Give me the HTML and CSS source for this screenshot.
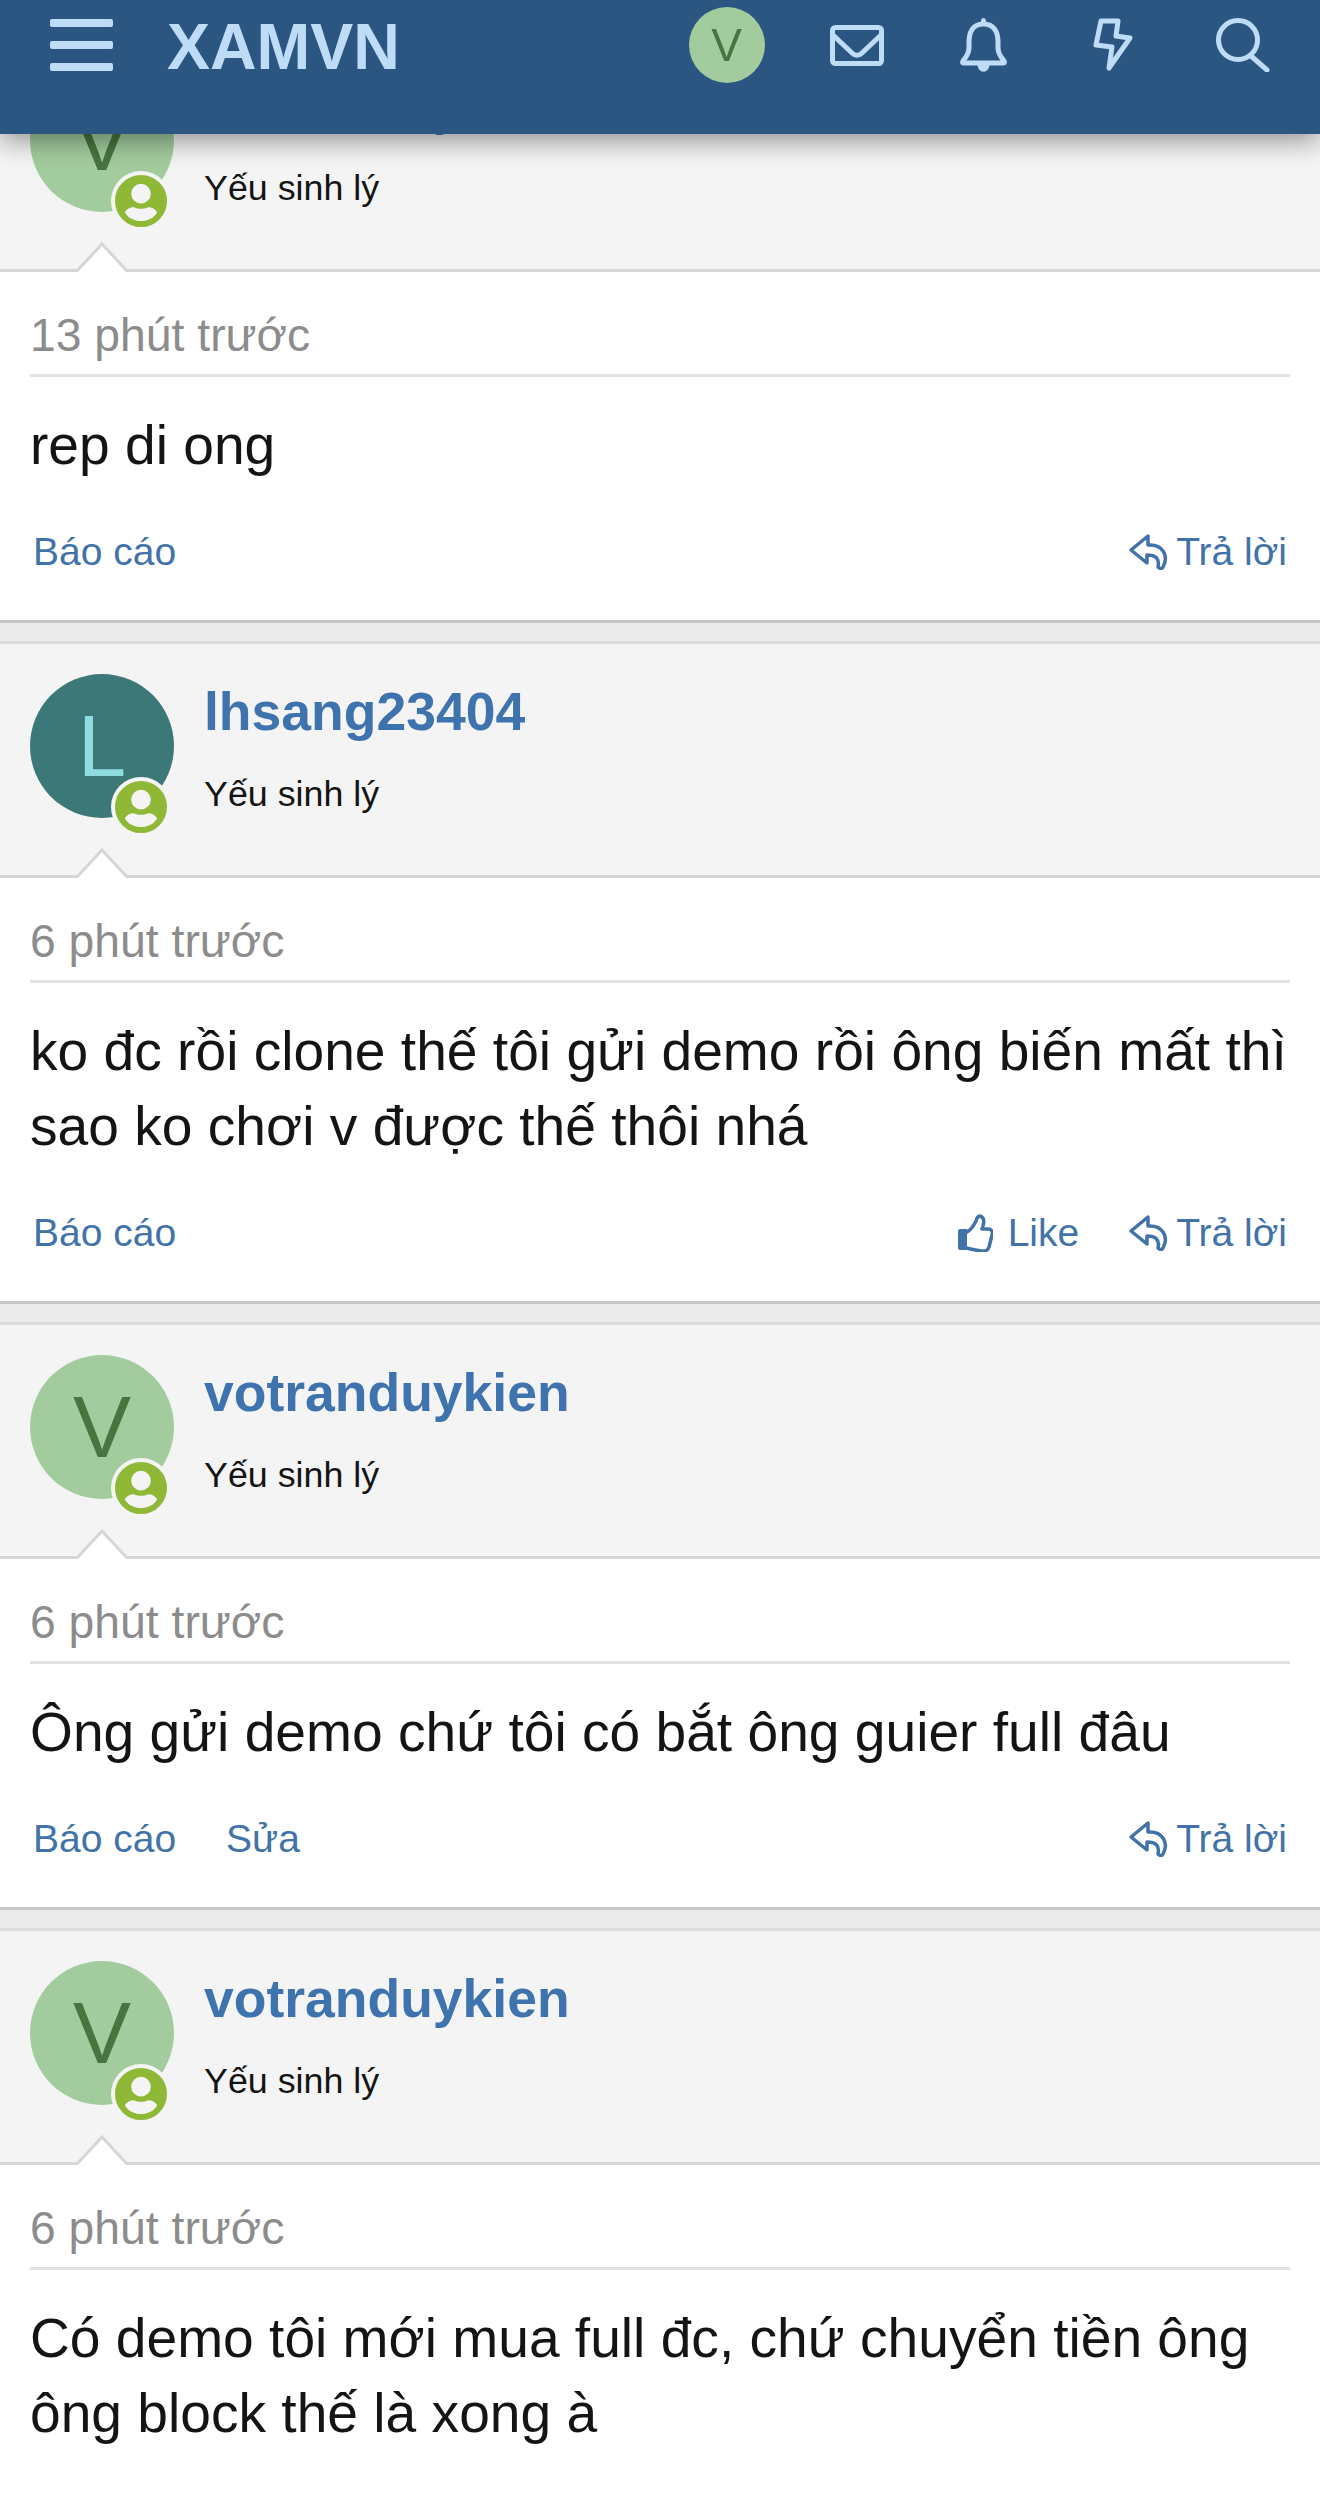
FILE: index.html
```html
<!DOCTYPE html>
<html lang="en">
<head>
   <meta charset="UTF-8">
   <meta name="viewport" content="width=device-width, initial-scale=1.0">
   <title>XAMVN</title>
   <link rel="stylesheet" href="styles.css">
</head>
<body>
   <svg class="icon-defs" width="0" height="0">
      <symbol id="person" viewBox="0 0 53 53">
         <circle cx="26.5" cy="19" r="10"/>
         <path d="M10 38c2-4 8-6 10-5 4 2 9 2 13 0 2-1 8 1 10 5-3 6-10 9-16.500 9S13 44 10 38z"/>
      </symbol>
      <symbol id="like" viewBox="0 0 36 38">
         <path class="solid" d="M1 17c0-1 1-2 2-2h7v21H3c-1 0-2-1-2-2z"/>
         <path class="line" d="M10 18c4-2 7-7 9-11 1-4 2-5 4-5 4 1 5 6 2 13h7c3 1 4 3 3 6l-3 12c-1 3-2 4-5 4-7 0-12-2-18-3"/>
      </symbol>
      <symbol id="reply" viewBox="0 0 40 36">
         <path class="line" d="M19 2 2 16l16 13v-8c8 0 13 3 11 12 2 2 4 2 5 0 6-11 0-23-15-22z"/>
      </symbol>
   </svg>

   <header class="topbar">
      <div class="topbar__menu"><span></span><span></span><span></span></div>
      <div class="topbar__brand">XAMVN</div>
      <nav class="topbar__nav">
         <div class="topbar__item"><div class="topbar__avatar">V</div></div>
         <div class="topbar__item topbar__item--mail">
            <svg width="54" height="41" viewBox="0 0 54 41"><rect x="2.500" y="2.500" width="49" height="36" rx="3"/><path d="M3 10l19 18c3 3 7 3 10 0l19-18"/></svg>
         </div>
         <div class="topbar__item topbar__item--bell">
            <svg width="47" height="54" viewBox="0 0 47 54"><path d="M23.500 6C13 6 9 14 9 24v6c0 6-3 9-6 13-1 2 0 2 1 2h39c1 0 2 0 1-2-3-4-6-7-6-13v-6c0-10-4-18-14.500-18z"/><path class="fill" d="M21 3c0-4 5-4 5 0v4h-5zM17.500 47h12c-1 9-11 9-12 0z"/></svg>
         </div>
         <div class="topbar__item topbar__item--bolt">
            <svg width="41" height="54" viewBox="0 0 41 54"><path d="M8 3h17l-2 15 14 2-21 30 3-21-16-2z"/></svg>
         </div>
         <div class="topbar__item">
            <svg width="54" height="54" viewBox="0 0 54 54"><circle cx="22" cy="22" r="19.500"/><path d="M35 38l16 14"/></svg>
         </div>
      </nav>
   </header>

   <main class="posts">
      <article class="post">
         <div class="post__user">
            <div class="avatar avatar--green">V<svg class="avatar__badge"><use href="#person"/></svg></div>
            <div class="post__who">
               <div class="post__name">votranduykien</div>
               <div class="post__title">Yếu sinh lý</div>
            </div>
            <svg class="post__arrow" width="56" height="30" viewBox="0 0 56 30"><path d="M2 30 28 2l26 28"/></svg>
         </div>
         <div class="post__body">
            <div class="post__date">13 phút trước</div>
            <div class="post__text">rep di ong</div>
            <div class="post__actions">
               <a class="action">Báo cáo</a>
               <a class="action action--push"><svg class="action__reply"><use href="#reply"/></svg>Trả lời</a>
            </div>
         </div>
      </article>

      <article class="post">
         <div class="post__user">
            <div class="avatar avatar--teal">L<svg class="avatar__badge"><use href="#person"/></svg></div>
            <div class="post__who">
               <div class="post__name">lhsang23404</div>
               <div class="post__title">Yếu sinh lý</div>
            </div>
            <svg class="post__arrow" width="56" height="30" viewBox="0 0 56 30"><path d="M2 30 28 2l26 28"/></svg>
         </div>
         <div class="post__body">
            <div class="post__date">6 phút trước</div>
            <div class="post__text">ko đc rồi clone thế tôi gửi demo rồi ông biến mất thì<br>sao ko chơi v được thế thôi nhá</div>
            <div class="post__actions">
               <a class="action">Báo cáo</a>
               <a class="action action--push"><svg class="action__like"><use href="#like"/></svg>Like</a>
               <a class="action"><svg class="action__reply"><use href="#reply"/></svg>Trả lời</a>
            </div>
         </div>
      </article>

      <article class="post">
         <div class="post__user">
            <div class="avatar avatar--green">V<svg class="avatar__badge"><use href="#person"/></svg></div>
            <div class="post__who">
               <div class="post__name">votranduykien</div>
               <div class="post__title">Yếu sinh lý</div>
            </div>
            <svg class="post__arrow" width="56" height="30" viewBox="0 0 56 30"><path d="M2 30 28 2l26 28"/></svg>
         </div>
         <div class="post__body">
            <div class="post__date">6 phút trước</div>
            <div class="post__text">Ông gửi demo chứ tôi có bắt ông guier full đâu</div>
            <div class="post__actions">
               <a class="action">Báo cáo</a>
               <a class="action">Sửa</a>
               <a class="action action--push"><svg class="action__reply"><use href="#reply"/></svg>Trả lời</a>
            </div>
         </div>
      </article>

      <article class="post">
         <div class="post__user">
            <div class="avatar avatar--green">V<svg class="avatar__badge"><use href="#person"/></svg></div>
            <div class="post__who">
               <div class="post__name">votranduykien</div>
               <div class="post__title">Yếu sinh lý</div>
            </div>
            <svg class="post__arrow" width="56" height="30" viewBox="0 0 56 30"><path d="M2 30 28 2l26 28"/></svg>
         </div>
         <div class="post__body">
            <div class="post__date">6 phút trước</div>
            <div class="post__text">Có demo tôi mới mua full đc, chứ chuyển tiền ông<br>ông block thế là xong à</div>
            <div class="post__actions"></div>
         </div>
      </article>
   </main>
</body>
</html>
```

FILE: styles.css
```css
* {
  margin: 0;
  padding: 0;
  box-sizing: border-box;
  font-family: "Liberation Sans", Arial, sans-serif;
}

html,
body {
  height: 2500px;
  overflow: hidden;
  background: #ebebeb;
}

.icon-defs {
  position: absolute;
}

/* Top bar */

.topbar {
  position: fixed;
  top: 0;
  left: 0;
  z-index: 10;
  width: 100%;
  height: 134px;
  padding: 0 13px 44px 50px;
  display: flex;
  align-items: center;
  background: #2c5682;
  box-shadow: 0 6px 26px rgba(0, 0, 0, 0.42);
  color: #bfdcf7;
}

.topbar__menu {
  width: 63px;
  display: flex;
  flex-direction: column;
  gap: 14px;
}

.topbar__menu span {
  height: 8px;
  border-radius: 2px;
  background: #bfdcf7;
}

.topbar__brand {
  margin-left: 54px;
  margin-top: 4px;
  font-size: 64.500px;
  font-weight: bold;
  line-height: 74px;
}

.topbar__nav {
  margin-left: auto;
  display: flex;
  align-items: center;
}

.topbar__item {
  width: 129px;
  height: 76px;
  display: flex;
  align-items: center;
  justify-content: center;
}

.topbar__item svg {
  fill: none;
  stroke: #bfdcf7;
  stroke-width: 5;
  stroke-linejoin: round;
  stroke-linecap: round;
}

.topbar__item svg .fill {
  fill: #bfdcf7;
  stroke: none;
}

.topbar__item--mail svg {
  margin-left: 2px;
}

.topbar__item--bell svg {
  margin-right: 2px;
}

.topbar__item--bolt svg {
  margin-right: 1px;
}

.topbar__avatar {
  width: 76px;
  height: 76px;
  border-radius: 50%;
  background: #a3cc9e;
  color: #47753f;
  font-size: 46px;
  line-height: 76px;
  text-align: center;
}

/* Posts */

.posts {
  padding-top: 35px;
}

.post {
  padding-bottom: 18px;
}

.post__user {
  position: relative;
  height: 237px;
  padding: 30px 30px 0;
  display: flex;
  gap: 30px;
  background: #f4f4f4;
  border-top: 3px solid #dcdcdc;
  border-bottom: 3px solid #d6d6d6;
}

.post__arrow {
  position: absolute;
  left: 74px;
  bottom: -3px;
  fill: #fff;
  stroke: #d6d6d6;
  stroke-width: 3;
}

.avatar {
  position: relative;
  flex: none;
  width: 144px;
  height: 144px;
  border-radius: 50%;
  font-size: 87px;
  line-height: 144px;
  text-align: center;
}

.avatar--green {
  background: #a3cc9e;
  color: #47753f;
}

.avatar--teal {
  background: #3d7878;
  color: #8fdde0;
}

.avatar__badge {
  position: absolute;
  right: 3px;
  bottom: -19px;
  width: 60px;
  height: 60px;
  border-radius: 50%;
  background: #8fb836;
  border: 4px solid #f4f4f4;
  fill: #f4f4f4;
}

.post__name {
  margin-top: 7px;
  font-size: 53.500px;
  font-weight: bold;
  line-height: 62px;
  color: #3f73ad;
}

.post__title {
  margin-top: 30px;
  font-size: 35.800px;
  line-height: 42px;
  color: #141414;
}

.post__body {
  padding: 0 30px;
  background: #fff;
  border-bottom: 3px solid #c8c8c8;
}

.post__date {
  height: 105px;
  padding-top: 38px;
  font-size: 46.300px;
  line-height: 50px;
  color: #8c8c8c;
  border-bottom: 3px solid #e2e2e2;
}

.post__text {
  padding-top: 31px;
  font-size: 55.150px;
  line-height: 75px;
  color: #141414;
}

.post__actions {
  height: 137px;
  padding: 0 3px;
  display: flex;
  align-items: center;
  gap: 50px;
}

.action {
  display: flex;
  align-items: center;
  font-size: 39px;
  line-height: 44px;
  color: #4273a8;
}

.action--push {
  margin-left: auto;
}

.action__like {
  width: 36px;
  height: 38px;
  margin-right: 15px;
}

.action__reply {
  width: 40px;
  height: 36px;
  margin-right: 7px;
}

.action svg {
  overflow: visible;
}

.line {
  fill: none;
  stroke: #4273a8;
  stroke-width: 3.500;
  stroke-linejoin: round;
  stroke-linecap: round;
}

.solid {
  fill: #4273a8;
}
```
